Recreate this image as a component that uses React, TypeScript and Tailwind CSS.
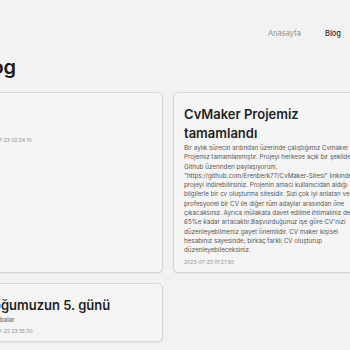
import React from "react";

const bodyLines = [
  "Bir aylık sürecin ardından üzerinde çalıştığımız Cvmaker",
  "Projemiz tamamlanmıştır. Projeyi herkese açık bir şekilde",
  "Github üzerinden paylaşıyorum.",
  "\"https://github.com/Erenberk77/CvMaker-Sitesi\" linkinden",
  "projeyi indirebilirsiniz. Projenin amacı kullanıcıdan aldığı",
  "bilgilerle bir cv oluşturma sitesidir. Sizi çok iyi anlatan ve",
  "profesyonel bir CV ile diğer tüm adaylar arasından öne",
  "çıkacaksınız. Ayrıca mülakata davet edilme ihtimaliniz de",
  "65%e kadar artacaktır.Başvurduğunuz işe göre CV'nizi",
  "düzenleyebilmeniz gayet önemlidir. CV maker kişisel",
  "hesabınız sayesinde, birkaç farklı CV oluşturup",
  "düzenleyebileceksiniz.",
];

type Post = {
  title: string;
  lines: string[];
  date: string;
};

const posts: Post[] = [
  { title: "İlk", lines: ["Test"], date: "2023-07-23 02:24:10" },
  { title: "CvMaker Projemiz tamamlandı", lines: bodyLines, date: "2023-07-23 01:27:50" },
  { title: "Bloğumuzun 5. günü", lines: ["Merhabalar"], date: "2023-07-22 23:35:30" },
];

const PostCard: React.FC<{ post: Post }> = ({ post }) => (
  <div className="rounded-[5px] border border-[#d6d6d6] bg-[#f5f5f5] px-[10px] pt-[12px] pb-[5px] shadow-[0_1px_2px_rgba(0,0,0,0.07)]">
    <h2 className="text-[13px] leading-[19px] font-semibold text-[#1f1f1f] w-[140px]">
      {post.title}
    </h2>
    <p className="mt-[1px] text-[6.25px] leading-[9.3px] text-[#555]">
      {post.lines.map((line, i) => (
        <span key={i} className="block whitespace-nowrap">
          {line}
        </span>
      ))}
    </p>
    <div className="mt-[2px] text-[5px] leading-[9px] text-[#8f8f8f]">{post.date}</div>
  </div>
);

export default function App() {
  return (
    <div
      className="w-[350px] h-[350px] overflow-hidden bg-[#f2f2f2]"
      style={{ fontFamily: "Inter, 'Noto Sans', sans-serif" }}
    >
      <nav className="flex justify-end items-center gap-[24px] pt-[28px] pr-[9px] h-[40px] text-[7.5px]">
        <a className="text-[#8f8f8f]">Anasayfa</a>
        <a className="text-[#2a2a2a] font-medium">Blog</a>
      </nav>

      <div className="-ml-[30px] w-[396px]">
        <h1 className="pl-[3px] mt-[14px] text-[20px] leading-[26px] font-semibold text-[#1a1a1a]">
          Blog
        </h1>

        <div className="mt-[12px] grid grid-cols-2 gap-[10px]">
          {posts.map((post) => (
            <PostCard key={post.date} post={post} />
          ))}
        </div>
      </div>
    </div>
  );
}
